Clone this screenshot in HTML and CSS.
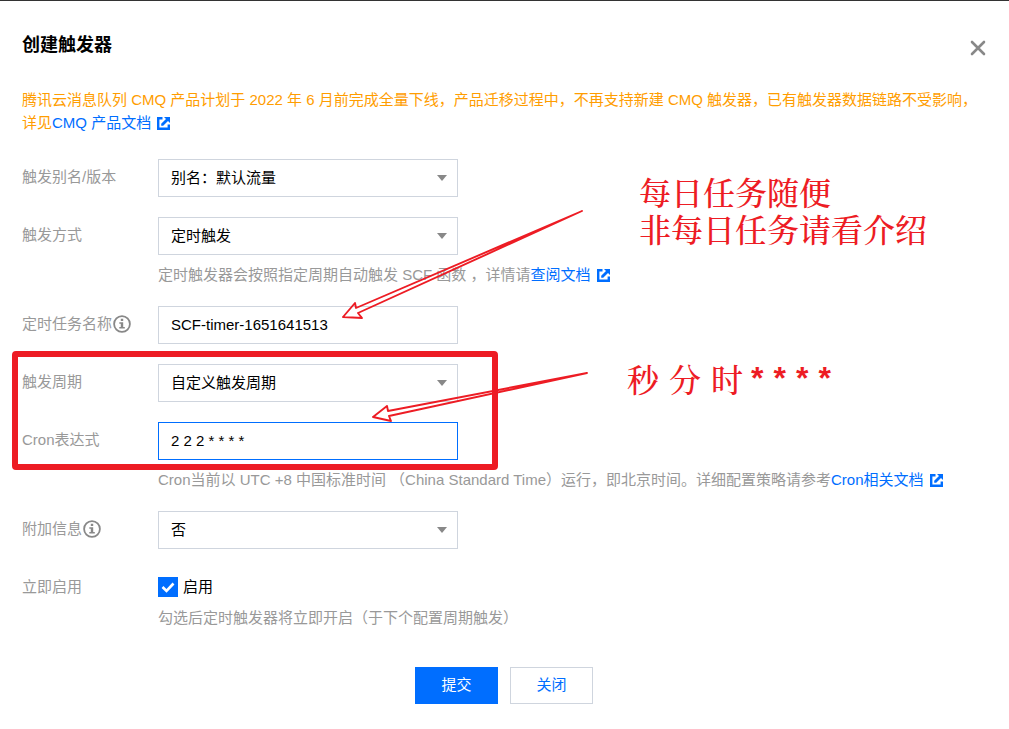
FILE: index.html
```html
<!DOCTYPE html>
<html lang="zh-CN">
<head>
<meta charset="utf-8">
<title>创建触发器</title>
<link rel="stylesheet" href="styles.css">
</head>
<body>
<svg class="defs" aria-hidden="true">
  <symbol id="external" viewBox="0 0 13 13">
    <path fill="#006eff" d="M0 0h5.5v2.4H2.4v8.2h8.2V7.5H13V13H0zM7 0h6v6l-2-2-4.8 4.8H4.2v-2L9 2z"/>
  </symbol>
  <symbol id="info" viewBox="0 0 18 18">
    <circle cx="9" cy="9" r="7.9" fill="none" stroke="#888" stroke-width="1.8"/>
    <path fill="#888" d="M7.8 3.8h2.4v2.2H7.8zM6.3 7.2h3.9v4.9h1.6v1.5H6.3v-1.5h1.5V8.7H6.3z"/>
  </symbol>
  <symbol id="caret" viewBox="0 0 10 6">
    <path fill="#888" d="M0 0h10L5 6z"/>
  </symbol>
</svg>
<main class="dialog">
  <header class="head">
    <h1 class="title">创建触发器</h1>
    <button class="close" type="button" aria-label="关闭窗口">
      <svg width="16" height="16" viewBox="0 0 16 16"><path d="M2 2l12 12M14 2L2 14" stroke="#888" stroke-width="2.6" stroke-linecap="round"/></svg>
    </button>
  </header>
  <p class="notice">腾讯云消息队列 CMQ 产品计划于 2022 年 6 月前完成全量下线，产品迁移过程中，不再支持新建 CMQ 触发器，已有触发器数据链路不受影响，详见<a class="link" href="#cmq">CMQ 产品文档<svg class="ext"><use href="#external"/></svg></a></p>
  <form class="form">
    <div class="row">
      <label class="label" for="alias">触发别名/版本</label>
      <div class="field">
        <div class="select"><select class="control" id="alias"><option>别名：默认流量</option></select><svg class="caret"><use href="#caret"/></svg></div>
      </div>
    </div>
    <div class="row">
      <label class="label" for="mode">触发方式</label>
      <div class="field">
        <div class="select"><select class="control" id="mode"><option>定时触发</option></select><svg class="caret"><use href="#caret"/></svg></div>
        <p class="help">定时触发器会按照指定周期自动触发 SCF 函数 ，详情请<a class="link" href="#timer">查阅文档<svg class="ext"><use href="#external"/></svg></a></p>
      </div>
    </div>
    <div class="row">
      <label class="label" for="name">定时任务名称<svg class="info"><use href="#info"/></svg></label>
      <div class="field"><input class="control" id="name" type="text" value="SCF-timer-1651641513"></div>
    </div>
    <div class="row">
      <label class="label" for="period">触发周期</label>
      <div class="field">
        <div class="select"><select class="control" id="period"><option>自定义触发周期</option></select><svg class="caret"><use href="#caret"/></svg></div>
      </div>
    </div>
    <div class="row">
      <label class="label" for="cron">Cron表达式</label>
      <div class="field">
        <input class="control active" id="cron" type="text" value="2 2 2 * * * *">
        <p class="help">Cron当前以 UTC +8 中国标准时间 （China Standard Time）运行，即北京时间。详细配置策略请参考<a class="link" href="#cron-doc">Cron相关文档<svg class="ext"><use href="#external"/></svg></a></p>
      </div>
    </div>
    <div class="row">
      <label class="label" for="extra">附加信息<svg class="info"><use href="#info"/></svg></label>
      <div class="field">
        <div class="select"><select class="control" id="extra"><option>否</option></select><svg class="caret"><use href="#caret"/></svg></div>
      </div>
    </div>
    <div class="row">
      <span class="label">立即启用</span>
      <div class="field">
        <label class="enable"><input class="check" type="checkbox" checked><svg class="tick" viewBox="0 0 20 20"><path d="M4.5 10l4 4 7-7.5" fill="none" stroke="#fff" stroke-width="2.6"/></svg>启用</label>
        <p class="help tight">勾选后定时触发器将立即开启（于下个配置周期触发）</p>
      </div>
    </div>
    <footer class="actions">
      <button class="btn primary" type="submit">提交</button>
      <button class="btn" type="button">关闭</button>
    </footer>
  </form>
  <svg class="marks" width="620" height="480" viewBox="0 0 620 480" aria-hidden="true">
    <rect x="15" y="354" width="480" height="113" rx="1" fill="none" stroke="#ed1c24" stroke-width="6"/>
    <g fill="none" stroke="#ed1c24" stroke-width="1.9" stroke-linejoin="round">
      <path d="M582 211L356 308l-1-5-12 14 19 1-4-5z"/>
      <path d="M587 373L388 411l-1-5-14 11 18 4-2-5z"/>
    </g>
  </svg>
  <p class="note note-task">每日任务随便<br>非每日任务请看介绍</p>
  <p class="note note-cron"><span class="units"><span>秒</span> <span>分</span> <span>时</span></span> <span class="stars"><span>*</span> <span>*</span> <span>*</span> <span>*</span></span></p>
</main>
</body>
</html>
```
FILE: styles.css
```css
* { box-sizing: border-box; }
body, h1, p { margin: 0; }
body {
  background: #fff;
  color: #000;
  font: 15px/22px "Liberation Sans", "Noto Sans CJK SC", sans-serif;
}
button, input, select { font: inherit; color: inherit; }
.defs { position: absolute; width: 0; height: 0; }
.dialog {
  position: relative;
  border-top: 1px solid #333;
  padding: 32px 23px 24px 22px;
}
.head {
  display: flex;
  align-items: center;
  justify-content: space-between;
  height: 24px;
}
.title { font-size: 18px; line-height: 24px; font-weight: 700; }
.close {
  display: flex;
  margin-top: 6px;
  padding: 0;
  border: 0;
  background: none;
}
.notice { margin-top: 31px; line-height: 23px; color: #ff9d00; }
.link { color: #006eff; text-decoration: none; }
.ext {
  width: 13px;
  height: 13px;
  margin-left: 6px;
  vertical-align: -2px;
}
.form { display: flex; flex-direction: column; gap: 20px; margin-top: 25px; }
.row { display: grid; grid-template-columns: 136px 1fr; align-items: start; }
.label {
  display: flex;
  align-items: center;
  height: 36px;
  color: #999;
}
.info { width: 18px; height: 18px; margin-left: 1px; }
.select { position: relative; width: 300px; }
.control {
  display: block;
  width: 300px;
  height: 38px;
  padding: 0 12px;
  border: 1px solid #cfd5de;
  border-radius: 0;
  background: #fff;
  appearance: none;
  outline: 0;
}
input.control { padding-bottom: 2px; }
.active { border-color: #006eff; }
.caret {
  position: absolute;
  top: 16px;
  right: 11px;
  width: 10px;
  height: 6px;
  pointer-events: none;
}
.help { padding-top: 9px; color: #999; }
.tight { padding-top: 2px; }
.enable {
  position: relative;
  display: flex;
  align-items: center;
  gap: 5px;
  width: max-content;
  height: 36px;
}
.check {
  width: 20px;
  height: 20px;
  margin: 0;
  appearance: none;
  background: #006eff;
}
.tick { position: absolute; left: 0; width: 20px; height: 20px; pointer-events: none; }
.actions { display: flex; justify-content: center; gap: 12px; margin-top: 18px; }
.btn {
  width: 83px;
  height: 37px;
  padding: 0 0 2px;
  border: 1px solid #cfd5de;
  background: #fff;
  color: #006eff;
}
.primary { border-color: #006eff; background: #006eff; color: #fff; }
.marks { position: absolute; top: -1px; left: 0; pointer-events: none; }
.note {
  position: absolute;
  color: #ed1c24;
  font-family: "Noto Serif CJK SC", "Noto Sans CJK SC", serif;
  font-size: 32px;
  font-weight: 500;
  line-height: 37px;
  white-space: nowrap;
}
.note-task { top: 172px; left: 639px; }
.note-cron { display: flex; gap: 8px; top: 359px; left: 627px; }
.units { display: flex; gap: 10px; }
.stars {
  display: flex;
  gap: 10px;
  font-family: "Liberation Sans", sans-serif;
  font-weight: 700;
}
```
